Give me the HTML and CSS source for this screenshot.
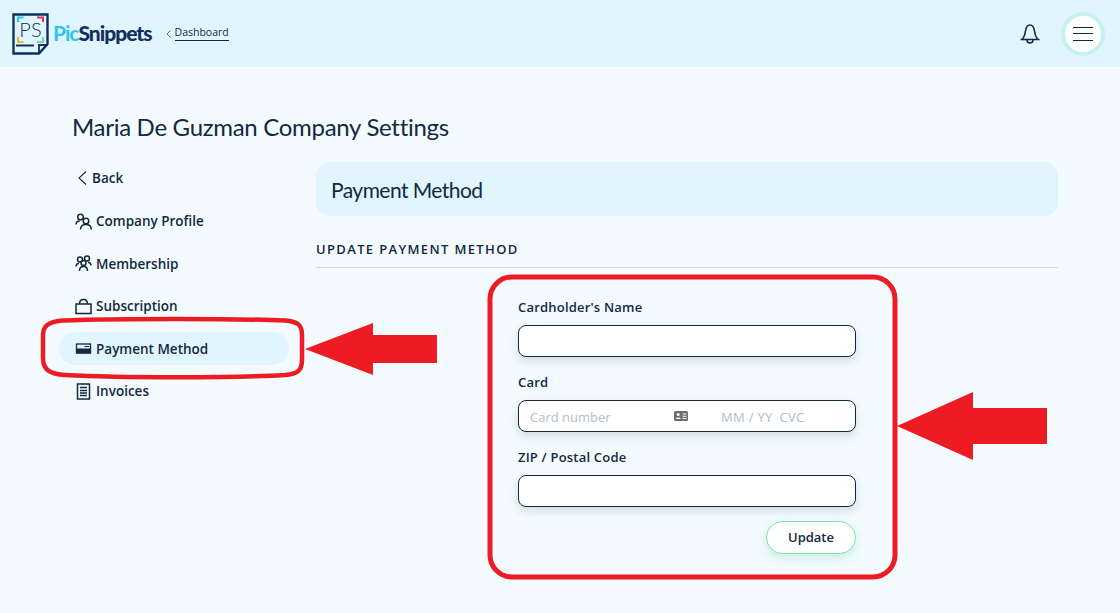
FILE: index.html
```html
<!DOCTYPE html>
<html lang="en">
<head>
    <meta charset="UTF-8">
    <meta name="viewport" content="width=device-width, initial-scale=1.0">
    <title>PicSnippets - Company Settings</title>
    <link rel="stylesheet" href="styles.css">
</head>
<body>
    <!-- Top bar -->
    <header class="topbar">
        <div class="brand">
            <svg class="logo" width="38" height="42" viewBox="0 0 38 42">
                <path d="M1.500 1.500H35.500V31L27 40.500H1.500Z" fill="none" stroke="#12305e" stroke-width="2.400"/>
                <path d="M27 40.500V32H35.500M4 32.500H22" fill="none" stroke="#12305e" stroke-width="1.800"/>
                <path d="M6 9V4.500H11.500" fill="none" stroke="#29c5f6" stroke-width="2"/>
                <path d="M25 4.500H31V9" fill="none" stroke="#d8344f" stroke-width="2"/>
                <path d="M6 24V29H11.500" fill="none" stroke="#f2b632" stroke-width="2"/>
                <path d="M25 29H31V24" fill="none" stroke="#6fdc9a" stroke-width="2"/>
                <text x="18.500" y="24" text-anchor="middle" class="logo-mark">PS</text>
            </svg>
            <span class="wordmark"><span class="wordmark-pic">Pic</span>Snippets</span>
            <svg class="crumb-chevron" width="5" height="8" viewBox="0 0 5 8"><path d="M4.500 .5L1 4l3.500 3.500" fill="none" stroke="#5b7690"/></svg>
            <a class="crumb" href="#">Dashboard</a>
        </div>
        <div class="top-actions">
            <svg class="bell" width="22" height="22" viewBox="0 0 22 22">
                <path d="M1.500 16.500H20.500M3 16.500C5.500 14 6 11.500 6.500 8 7 4.500 8.500 2 11 2S15 4.500 15.500 8C16 11.500 16.500 14 19 16.500M8 17C8 21 14 21 14 17" fill="none" stroke="#12293f" stroke-width="1.600"/>
            </svg>
            <button class="menu-btn" aria-label="Menu"><span></span><span></span><span></span></button>
        </div>
    </header>

    <main class="page">
        <h1 class="page-title">Maria De Guzman Company Settings</h1>
        <div class="settings">
            <!-- Side navigation -->
            <nav class="side-nav">
                <a class="nav-item nav-back" href="#">
                    <svg width="10" height="16" viewBox="0 0 10 16"><path d="M9 1.500L2 8l7 6.500" fill="none" stroke="#12293f" stroke-width="1.100"/></svg>
                    Back
                </a>
                <a class="nav-item" href="#">
                    <svg width="17" height="17" viewBox="0 0 17 17" fill="none" stroke="#12293f" stroke-width="1.500"><circle cx="5.500" cy="4" r="2.800"/><circle cx="11" cy="8" r="2.800"/><path d="M1 11.500C1 9 2.500 8 4.800 8M5.500 16.500C5.500 13 8 11.500 11 11.500S16.300 13 16.300 16.500"/></svg>
                    Company Profile
                </a>
                <a class="nav-item" href="#">
                    <svg width="17" height="17" viewBox="0 0 17 17" fill="none" stroke="#12293f" stroke-width="1.500"><circle cx="5" cy="4.500" r="2.500"/><circle cx="12" cy="3.500" r="2.500"/><circle cx="8.500" cy="8" r="2.500"/><path d="M1 11.500C1 9.500 2 8.500 4 8.200M16 10.500C16 8.500 15 7.500 13 7.200M4.500 16C4.500 13 6 11.500 8.500 11.500S12.500 13 12.500 16"/></svg>
                    Membership
                </a>
                <a class="nav-item" href="#">
                    <svg width="17" height="17" viewBox="0 0 17 17" fill="none" stroke="#12293f" stroke-width="1.500"><rect x="1" y="6" width="15" height="9.500"/><path d="M4.500 6C4.500 3 6 1.500 8.500 1.500S12.500 3 12.500 6"/></svg>
                    Subscription
                </a>
                <a class="nav-item is-active" href="#">
                    <svg width="17" height="17" viewBox="0 0 17 17"><rect x="1.500" y="4" width="14" height="9" fill="#e1f5fe" stroke="#12293f" stroke-width="1.300"/><rect x="1" y="8.500" width="15" height="5" fill="#12293f"/><rect x="9.500" y="6" width="4.500" height="1" fill="#12293f"/></svg>
                    Payment Method
                </a>
                <a class="nav-item" href="#">
                    <svg width="17" height="17" viewBox="0 0 17 17" fill="none" stroke="#12293f"><rect x="2.500" y="1" width="12" height="15" stroke-width="1.500"/><path d="M5 4.500H12M5 7.500H12M5 10H12M5 12.500H12" stroke-width="1.300"/></svg>
                    Invoices
                </a>
            </nav>

            <!-- Payment form -->
            <section class="content">
                <h2 class="panel-title">Payment Method</h2>
                <h3 class="section-title">Update Payment Method</h3>
                <form class="pay-form">
                    <label class="field-label">Cardholder's Name</label>
                    <input class="field" type="text">
                    <label class="field-label">Card</label>
                    <div class="field card-field">
                        <span class="card-number">Card number</span>
                        <svg width="14" height="10" viewBox="0 0 14 10"><rect width="14" height="10" rx="1.500" fill="#6e6e6e"/><circle cx="4.200" cy="3.500" r="1.500" fill="#fff"/><path d="M1.700 8C1.700 6 6.700 6 6.700 8ZM8.500 2.500H12.500V3.500H8.500ZM8.500 4.700H12.500V5.700H8.500ZM8.500 6.900H12.500V7.900H8.500Z" fill="#fff"/></svg>
                        <span class="card-date">MM / YY</span>
                        <span class="card-cvc">CVC</span>
                    </div>
                    <label class="field-label">ZIP / Postal Code</label>
                    <input class="field" type="text">
                    <div class="form-actions">
                        <button class="update-btn" type="button">Update</button>
                    </div>
                </form>
            </section>
        </div>
    </main>

    <!-- Red markup drawn over the screenshot -->
    <svg class="markup" width="1120" height="613" viewBox="0 0 1120 613">
        <path d="M62 320.500C120 318.500 235 318.500 285 320.500 298 321.500 302 325 302 335V360C302 371 297 374 285 375 235 378 120 378 65 375 50 374 43 370 43 358V335C43 326 48 322 62 320.500Z" fill="none" stroke="#ed1c24" stroke-width="4.500"/>
        <path d="M305 349L373 323V335H437V363H373V375Z" fill="#ed1c24"/>
        <rect x="490" y="277" width="405" height="300" rx="22" fill="none" stroke="#ed1c24" stroke-width="5"/>
        <path d="M897 426L973 392V408H1047V444H973V460Z" fill="#ed1c24"/>
    </svg>
</body>
</html>
```

FILE: styles.css
```css
/* Base */
* {
    box-sizing: border-box;
}

body {
    margin: 0;
    height: 613px;
    overflow: hidden;
    position: relative;
    background: #f3fbff;
    color: #12293f;
    font-family: 'Open Sans', 'Liberation Sans', sans-serif;
}

a {
    color: inherit;
    text-decoration: none;
}

/* Top bar */
.topbar {
    height: 67px;
    background: #e1f5fe;
    display: flex;
    align-items: center;
    justify-content: space-between;
    padding: 0 15px 0 12px;
}

.brand {
    display: flex;
    align-items: center;
}

.logo-mark {
    font-family: 'Lato', sans-serif;
    font-size: 20px;
    font-weight: 300;
    fill: #12305e;
}

.wordmark {
    margin-left: 3px;
    margin-top: -3px;
    font-family: 'Lato', sans-serif;
    font-size: 21px;
    font-weight: 900;
    letter-spacing: -1px;
    color: #12305e;
}

.wordmark-pic {
    color: #29c5f6;
    font-weight: 700;
}

.crumb-chevron {
    margin-left: 14px;
}

.crumb {
    margin-left: 4px;
    font-size: 10.500px;
    line-height: 13px;
    padding-bottom: 1px;
    border-bottom: 1px solid #12293f;
}

.top-actions {
    display: flex;
    align-items: center;
    gap: 20px;
}

.menu-btn {
    width: 44px;
    height: 44px;
    border-radius: 50%;
    border: 4px solid #c6f1ec;
    background: #fff;
    display: flex;
    flex-direction: column;
    align-items: center;
    justify-content: center;
    gap: 5.500px;
    padding: 0;
}

.menu-btn span {
    width: 20px;
    height: 1px;
    background: #12293f;
}

/* Page */
.page {
    padding: 0 62px 0 72px;
}

.page-title {
    margin: 44px 0 0;
    font-family: 'Lato', sans-serif;
    font-size: 24px;
    line-height: 32px;
    font-weight: 400;
    letter-spacing: -0.3px;
}

.settings {
    display: grid;
    grid-template-columns: 244px 742px;
    margin-top: 19px;
}

/* Side navigation */
.side-nav {
    display: flex;
    flex-direction: column;
    margin-left: -13px;
    width: 230px;
}

.nav-item {
    height: 33px;
    margin-bottom: 9.600px;
    padding-left: 16px;
    display: flex;
    align-items: center;
    gap: 4px;
    font-size: 13.500px;
    font-weight: 600;
    border-radius: 17px;
}

.nav-back {
    padding-left: 18px;
    padding-bottom: 2px;
    gap: 5px;
}

.is-active {
    background: #e1f5fe;
}

/* Payment panel */
.panel-title {
    margin: 0;
    height: 54px;
    padding-left: 15px;
    background: #e1f5fe;
    border-radius: 14px;
    font-family: 'Lato', sans-serif;
    font-size: 21px;
    line-height: 56px;
    font-weight: 400;
    letter-spacing: -0.55px;
}

.section-title {
    margin: 24px 0 0;
    height: 28px;
    border-bottom: 1px solid #d5dade;
    font-size: 13px;
    line-height: 18px;
    font-weight: 600;
    letter-spacing: 1.350px;
    text-transform: uppercase;
}

.pay-form {
    width: 338px;
    margin: 30px 0 0 202px;
    display: flex;
    flex-direction: column;
}

.field-label {
    font-size: 13px;
    line-height: 18px;
    font-weight: 600;
    letter-spacing: 0.2px;
    margin-bottom: 9px;
}

.field {
    height: 32px;
    margin-bottom: 16px;
    background: #fff;
    border: 1px solid #12293f;
    border-radius: 8px;
    box-shadow: 0 4px 10px rgba(18, 41, 63, 0.15);
}

.card-field {
    display: flex;
    align-items: center;
    padding-left: 11px;
    font-size: 13px;
    color: #b3bcc8;
}

.card-number {
    width: 144px;
    padding-top: 2px;
}

.card-date {
    margin-left: 33px;
    padding-top: 2px;
    letter-spacing: 0.3px;
}

.card-cvc {
    margin-left: 7px;
    padding-top: 2px;
    letter-spacing: 0.3px;
}

.form-actions {
    display: flex;
    justify-content: flex-end;
    margin-top: -2px;
}

.update-btn {
    width: 90px;
    height: 33px;
    padding-bottom: 3px;
    background: #fff;
    border: 1px solid #7fe3a4;
    border-radius: 17px;
    box-shadow: 0 4px 10px rgba(80, 200, 130, 0.25);
    color: #12293f;
    font-family: inherit;
    font-size: 13px;
    font-weight: 600;
}

/* Annotation overlay */
.markup {
    position: absolute;
    top: 0;
    left: 0;
    pointer-events: none;
}
```
